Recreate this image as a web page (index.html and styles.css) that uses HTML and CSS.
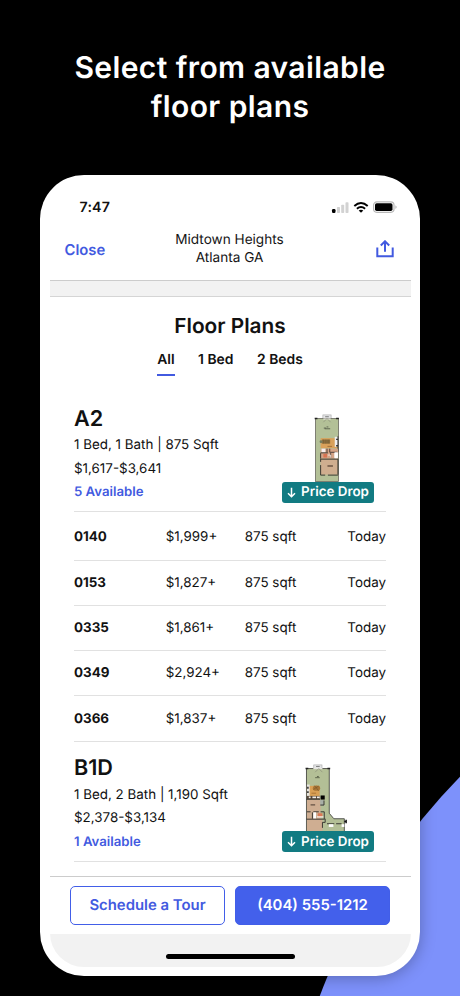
FILE: index.html
```html
<!DOCTYPE html>
<html lang="en">
<head>
<meta charset="utf-8">
<title>Floor plans</title>
<link rel="stylesheet" href="styles.css">
</head>
<body>
<main class="poster">
  <svg class="backdrop" width="460" height="996" viewBox="0 0 460 996"><circle cx="916" cy="1223" r="638" fill="#7d91fb"/></svg>
  <h1 class="headline">Select from available<br>floor plans</h1>
  <section class="phone">
    <div class="screen">
      <header class="top">
        <div class="status">
          <span class="time">7:47</span>
          <svg class="indicators" width="66" height="14" viewBox="0 0 66 14">
            <rect x="1" y="9" width="3.5" height="4" rx="1.2" fill="#000"/>
            <g fill="#d2d2d2"><rect x="6" y="7" width="3" height="6" rx=".8"/><rect x="10.2" y="4.7" width="3" height="8.3" rx=".8"/><rect x="14.5" y="2.3" width="3" height="10.7" rx=".8"/></g>
            <g fill="none" stroke="#000" stroke-width="2"><path d="M23.3 5.9Q30 .1 36.7 5.9"/><path d="M25.9 8.7Q30 5.2 34.1 8.7"/></g>
            <path d="M27.7 10.5Q30 8.8 32.3 10.5L30 12.8Z" fill="#000"/>
            <rect x="42.6" y="1.9" width="20.4" height="10.4" rx="3.2" fill="#fff" stroke="#b9b9b9" stroke-width="1.2"/>
            <rect x="44" y="3.3" width="17.5" height="7.6" rx="1.7" fill="#000"/>
            <path d="M64.4 5.2Q67 7.1 64.4 9Z" fill="#b9b9b9"/>
          </svg>
        </div>
        <div class="nav">
          <span class="close">Close</span>
          <div class="place"><div class="place-name">Midtown Heights</div><div class="place-city">Atlanta GA</div></div>
          <svg class="share" width="18" height="18" viewBox="0 0 18 18" fill="none" stroke="#425ae0" stroke-width="2"><path d="M1.3 7.5V16.2H16.7V7.5M9 11.7V1.5M4.8 5.5L9 1.3L13.2 5.5"/></svg>
        </div>
      </header>
      <div class="band"></div>
      <div class="content">
        <h2 class="title">Floor Plans</h2>
        <nav class="tabs"><span class="tab active">All</span><span class="tab">1 Bed</span><span class="tab">2 Beds</span></nav>
        <article class="plan">
          <div class="info">
            <h3>A2</h3>
            <p class="spec">1 Bed, 1 Bath | 875 Sqft</p>
            <p class="range">$1,617-$3,641</p>
            <p class="avail">5 Available</p>
          </div>
          <div class="preview">
            <svg class="drawing" width="92" height="74" viewBox="0 0 92 74">
              <rect x="41.5" y="1" width="9" height="6" fill="#e3e4e5" stroke="#aaa" stroke-width=".7"/><path d="M44 3h4" stroke="#555" stroke-width=".8"/>
              <rect x="33.5" y="5" width="25" height="69" fill="#b3c097" stroke="#5b5b50" stroke-width=".8"/>
              <path d="M42 5.5h8" stroke="#e6e6df" stroke-width="1.3"/><path d="M42 9l4-4 4 4" fill="none" stroke="#898b78" stroke-width=".7"/>
              <path d="M32.5 5h3M56 5h3" stroke="#222" stroke-width="1.7"/>
              <path d="M42.5 15.4h2.5m.5-1.2h2m-4 2h6" stroke="#58604c" stroke-width="1"/>
              <rect x="39" y="26.5" width="19" height="11" fill="#d9a15a"/>
              <rect x="40.5" y="28" width="9" height="4.5" fill="#92723f"/><path d="M42 28v4.5m2-4.5v4.5m2-4.5v4.5m2-4.5v4.5" stroke="#64542f" stroke-width=".6"/><circle cx="39.5" cy="30.5" r="1.6" fill="#747c5d"/>
              <path d="M46.5 35.5h5" stroke="#8d5e2c" stroke-width=".8"/>
              <rect x="54.5" y="25" width="3.5" height="11" fill="#eee"/><path d="M57.5 24.5h1v17h-1zM56 27h2v1.5h-2zM56 34h2v1.5h-2z" fill="#333"/>
              <rect x="39" y="38" width="19" height="11" fill="#d5a486"/><rect x="40" y="38" width="4.2" height="4.2" fill="#f6eeee"/><path d="M46 38v4m3-4v4h8" fill="none" stroke="#453a36" stroke-width="1"/>
              <path d="M39 42.6h8M39 43v6M50 43v5" stroke="#33302b" stroke-width="1"/><rect x="42" y="43.7" width="4" height="4" fill="#d77352"/><path d="M47 45h3v3" fill="none" stroke="#f7e8e3"/><rect x="54" y="41.8" width="4" height="7" rx="1" fill="#fff"/>
              <rect x="39" y="49.5" width="19" height="17" fill="#cfae8f"/><path d="M39 49.5h19v17M39 49.5v3M39 56v11h5m3 0h11" fill="none" stroke="#302e29" stroke-width="1"/><path d="M46.5 57h6" stroke="#685241" stroke-width="1.6"/>
            </svg>
            <div class="drop"><svg width="9" height="11" viewBox="0 0 9 11"><path d="M4.5.8V9.8M1 6.3l3.5 3.5L8 6.3" fill="none" stroke="#fff" stroke-width="1.5"/></svg><span>Price Drop</span></div>
          </div>
        </article>
        <div class="units">
          <div class="unit"><b>0140</b><span>$1,999+</span><span>875 sqft</span><span>Today</span></div>
          <div class="unit"><b>0153</b><span>$1,827+</span><span>875 sqft</span><span>Today</span></div>
          <div class="unit"><b>0335</b><span>$1,861+</span><span>875 sqft</span><span>Today</span></div>
          <div class="unit"><b>0349</b><span>$2,924+</span><span>875 sqft</span><span>Today</span></div>
          <div class="unit"><b>0366</b><span>$1,837+</span><span>875 sqft</span><span>Today</span></div>
        </div>
        <article class="plan second">
          <div class="info">
            <h3>B1D</h3>
            <p class="spec">1 Bed, 2 Bath | 1,190 Sqft</p>
            <p class="range">$2,378-$3,134</p>
            <p class="avail">1 Available</p>
          </div>
          <div class="preview">
            <svg class="drawing" width="92" height="74" viewBox="0 0 92 74">
              <rect x="31.5" y="1" width="9" height="5" fill="#e3e4e5" stroke="#aaa" stroke-width=".7"/><path d="M34 2.7h4" stroke="#555" stroke-width=".8"/>
              <path d="M23.5 5H48.5V54L53.5 60H65V74H23.5Z" fill="#b3bf96" stroke="#3b3c37" stroke-width=".9"/>
              <path d="M31 5h10" stroke="#e7e7df" stroke-width="1.5"/><path d="M33 9l4-4 4 4" fill="none" stroke="#898b78" stroke-width=".7"/>
              <path d="M22.5 5h3M46.5 5h3" stroke="#222" stroke-width="1.7"/><path d="M33 15h5m-3-1.3h2" stroke="#586047"/>
              <rect x="24" y="24" width="14" height="11.5" fill="#d9a055"/><ellipse cx="34.5" cy="26.5" rx="4" ry="2.8" fill="#a87635"/><path d="M31 28l6-4m-5-.5l5 6" stroke="#715029" stroke-width=".6"/><path d="M29 32h5" stroke="#9b6529" stroke-width=".8"/>
              <rect x="24" y="22.5" width="3" height="13" fill="#e6e5df"/><path d="M24 25h2v2h-2zM24 30h2v1.7h-2z" fill="#444"/>
              <rect x="24" y="35" width="14" height="3.5" fill="#57483a"/><path d="M26 36.5h2m2 0h4m1 0h3" stroke="#f4eee7" stroke-width="2"/><rect x="39" y="34.5" width="4.5" height="4.5" fill="#000"/>
              <rect x="24" y="39" width="15" height="23" fill="#cfae92"/><rect x="38.5" y="39.5" width="4" height="6" fill="#a9afa7"/><path d="M23.5 38.7h15M42.7 40v5h-4" fill="none" stroke="#302e2b"/>
              <path d="M28 44.8h5" stroke="#655143" stroke-width="1.6"/><path d="M24 52.4h4m3 0h6m2 0h4v8M30 53v7" fill="none" stroke="#302e2b"/>
              <rect x="31" y="53" width="3" height="7" fill="#fff"/><rect x="36" y="54" width="5" height="4" fill="#db7955"/><path d="M35 58h7" stroke="#f7ede8" stroke-width="1.5"/>
              <rect x="24" y="60.5" width="17" height="13" fill="#cfae92"/><path d="M23.5 60.5h20M41 64v6M46 65.5h8m2 0h6M44 60v4h-3" fill="none" stroke="#302e2b"/>
              <rect x="48" y="66" width="5" height="3" fill="#fff"/><rect x="62" y="66" width="3" height="3" fill="#fff"/><path d="M67 61v4M65 63h2" stroke="#111" stroke-width="1.6"/>
            </svg>
            <div class="drop"><svg width="9" height="11" viewBox="0 0 9 11"><path d="M4.5.8V9.8M1 6.3l3.5 3.5L8 6.3" fill="none" stroke="#fff" stroke-width="1.5"/></svg><span>Price Drop</span></div>
          </div>
        </article>
      </div>
      <footer class="actions"><div class="button tour">Schedule a Tour</div><div class="button call">(404) 555-1212</div></footer>
      <div class="home"><div class="handle"></div></div>
    </div>
  </section>
</main>
</body>
</html>
```
FILE: styles.css
```css
* { box-sizing: border-box; }
body { margin: 0; background: #000; color: #111; font-family: Inter, "Liberation Sans", sans-serif; text-rendering: geometricPrecision; }
h1, h2, h3, p { margin: 0; }
svg { display: block; flex: none; }
.poster { position: relative; height: 996px; padding: 49px 40px 20px; overflow: hidden; isolation: isolate; }
.backdrop { position: absolute; inset: 0; z-index: -1; }
.headline { height: 126px; color: #fff; font-size: 30px; font-weight: 600; line-height: 39px; letter-spacing: .4px; text-align: center; white-space: nowrap; }
.phone { height: 801px; margin: 0 .5px 0 0; padding: 9px 9px 9px 9.5px; background: #fff; border-radius: 44px; box-shadow: 0 2px 16px rgba(0, 0, 0, .28); }
.screen { height: 783px; display: flex; flex-direction: column; border-radius: 34px; overflow: hidden; }
.top { height: 96px; flex: none; }
.status { height: 46px; padding: 15px 14px 0 30px; display: flex; justify-content: space-between; }
.time { font-size: 14.2px; font-weight: 600; line-height: 18px; letter-spacing: .2px; }
.indicators { margin-top: 1px; }
.nav { height: 38px; padding: 0 17px 0 15px; display: grid; grid-template-columns: 80px 1fr 79px; align-items: center; }
.close { padding-top: 1px; color: #425ae0; font-size: 14.8px; font-weight: 600; }
.place { text-align: center; font-size: 13.6px; line-height: 18px; color: #161616; }
.share { justify-self: end; }
.band { height: 17px; flex: none; background: #f2f2f2; border-top: 1px solid #ccc; border-bottom: 1px solid #d5d5d5; }
.content { height: 579px; flex: none; padding: 18px 24.5px 0; }
.title { font-size: 20.8px; font-weight: 600; line-height: 24px; text-align: center; }
.tabs { display: flex; justify-content: center; gap: 23.5px; height: 37px; padding-top: 12px; font-size: 13.9px; font-weight: 600; line-height: 18px; }
.tab.active { height: 25px; border-bottom: 2px solid #425ae0; }
.plan { display: flex; justify-content: space-between; height: 135.5px; padding-top: 29px; border-bottom: 1px solid #e1e1e1; }
.info h3 { height: 29px; font-size: 21.6px; font-weight: 600; line-height: 28px; }
.info p { font-size: 13.4px; line-height: 23.6px; white-space: nowrap; }
.info .avail { color: #425ae0; font-size: 13.2px; font-weight: 600; }
.preview { width: 92px; margin-right: 12px; padding-top: 9px; }
.drawing { height: 67.5px; margin-left: -1px; overflow: hidden; }
.drop { width: 92px; height: 21px; display: flex; align-items: center; justify-content: center; gap: 5px; border-radius: 3px; background: #127b82; color: #fff; font-size: 13.4px; font-weight: 600; white-space: nowrap; }
.unit { display: grid; grid-template-columns: 91.7px 79px 1fr auto; align-items: center; height: 45.2px; border-bottom: 1px solid #e1e1e1; font-size: 13.4px; }
.unit:first-child { height: 49px; padding-top: 2px; }
.unit:last-child { height: 46px; }
.unit b { font-weight: 700; }
.second { height: 119.5px; padding-top: 12.5px; }
.second h3 { line-height: 27px; }
.actions { height: 58px; flex: none; display: flex; justify-content: center; gap: 9.5px; padding-top: 8.5px; border-top: 1px solid #ccc; }
.button { width: 155.5px; height: 39px; display: flex; align-items: center; justify-content: center; border-radius: 5px; font-size: 14.9px; font-weight: 600; border: 1px solid #425ee8; white-space: nowrap; }
.tour { color: #425ae0; }
.call { background: #4360eb; color: #fff; }
.home { height: 33px; flex: none; padding-top: 20px; background: #f2f2f2; }
.handle { width: 129px; height: 5px; margin: 0 auto; border-radius: 3px; background: #000; }
```
